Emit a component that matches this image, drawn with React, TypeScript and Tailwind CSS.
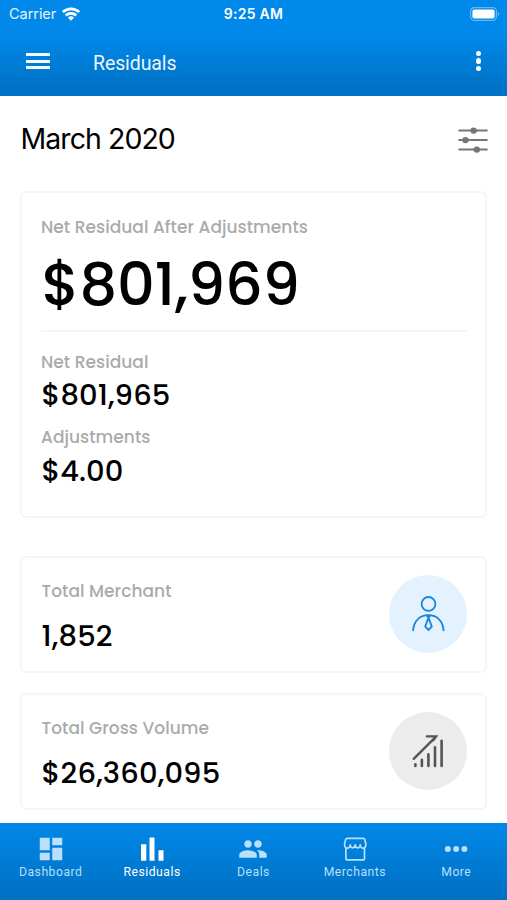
import React from 'react';
import { MdDashboard, MdPeople } from 'react-icons/md';

const WifiIcon = () => (
  <svg width="18" height="14" viewBox="0 0 18 14" fill="none" stroke="white" strokeWidth="2.7">
    <path d="M0.9 5.1a11.6 11.6 0 0 1 16.2 0" />
    <path d="M3.8 8.5a7.5 7.5 0 0 1 10.4 0" />
    <path d="M9 13.8L6 10.8a4.3 4.3 0 0 1 6 0z" fill="white" stroke="none" />
  </svg>
);

const BatteryIcon = () => (
  <svg width="30" height="14" viewBox="0 0 30 14">
    <rect x="0.6" y="0.6" width="25.8" height="12.8" rx="3.6" fill="none" stroke="white" strokeOpacity="0.4" strokeWidth="1.2" />
    <rect x="2.4" y="2.4" width="22.2" height="9.2" rx="2" fill="white" />
    <path d="M27.8 4.8c1.9 0.8 1.9 3.6 0 4.4z" fill="white" fillOpacity="0.4" />
  </svg>
);

const SlidersIcon = () => (
  <svg width="30" height="26" viewBox="0 0 30 26" stroke="#747776" strokeWidth="2" strokeLinecap="round" fill="#747776">
    <path d="M1.2 3.6h27.6M1.2 13.1h27.6M1.2 22.6h27.6" />
    <g stroke="none">
      <circle cx="15.6" cy="3.6" r="3.2" />
      <circle cx="7.5" cy="13.1" r="3.2" />
      <circle cx="18.8" cy="22.6" r="3.2" />
    </g>
  </svg>
);

const MerchantIcon = () => (
  <svg width="34" height="36" viewBox="0 0 34 36" fill="none" stroke="#1a86dc" strokeWidth="1.8" strokeLinecap="round" strokeLinejoin="round">
    <circle cx="17.5" cy="7.9" r="6.9" />
    <path d="M2.1 34.4C2.9 24.5 9.1 19.2 17.4 19.2s14.4 5.3 15.2 15.2" />
    <path d="M16 19.8l1.5 1.8 1.5-1.8M17.5 21.6l-3.3 9 3.3 3.4 3.3-3.4z" />
  </svg>
);

const GrowthIcon = () => (
  <svg width="34" height="34" viewBox="0 0 34 34" fill="none" stroke="#555" strokeWidth="2.3" strokeLinecap="round">
    <path d="M2.7 24.9L25 2.6M15.8 2.4h9.4l-2.7 3.8" />
    <path d="M4.4 30.3v1.6M10.9 25.8v6.1M17.4 20.3v11.6M24 13.2v18.7M30.6 6.8v25.1" strokeWidth="2.6" />
  </svg>
);

const BarsIcon = () => (
  <svg width="30" height="30" viewBox="0 0 30 30" fill="currentColor">
    <path d="M4 10.3h5.3v16.4H4zM12.5 3.6h5v23.1h-5zM21.5 16.3h5v10.4h-5z" />
  </svg>
);

const StoreIcon = () => (
  <svg width="30" height="30" viewBox="0 0 30 30" fill="none" stroke="currentColor" strokeWidth="1.7" strokeLinecap="round" strokeLinejoin="round">
    <path d="M7 4.4h16.4q1 0 1.3 1l1.1 4.4a2.8 3.8 0 0 1-5.6 1 2.5 3 0 0 1-5 0 2.5 3 0 0 1-5 0 2.8 3.8 0 0 1-5.6-1l1.1-4.4q0.3-1 1.3-1z" />
    <path d="M5.9 13.9v10.9q0 1 1 1h16.6q1 0 1-1V13.9" />
  </svg>
);

const MoreIcon = () => (
  <svg width="30" height="30" viewBox="0 0 30 30" fill="currentColor">
    <circle cx="6.8" cy="15" r="3" />
    <circle cx="15.1" cy="15" r="3" />
    <circle cx="23.4" cy="15" r="3" />
  </svg>
);

const navItems = [
  { label: 'Dashboard', icon: <MdDashboard size={30} /> },
  { label: 'Residuals', icon: <BarsIcon />, active: true },
  { label: 'Deals', icon: <MdPeople size={30} /> },
  { label: 'Merchants', icon: <StoreIcon /> },
  { label: 'More', icon: <MoreIcon /> },
];

interface StatCardProps {
  label: string;
  value: string;
  iconClass: string;
  icon: React.ReactNode;
}

const StatCard: React.FC<StatCardProps> = ({ label, value, iconClass, icon }) => (
  <section className="flex h-[117px] items-start justify-between rounded-md border-2 border-[#f6f6f6] pt-[16px] pr-[18.5px] pl-[19.5px]">
    <div className="whitespace-nowrap">
      <p className="mt-[4.5px] h-6 text-[17px] leading-6 font-medium tracking-[0.05px] text-[#a9abab]">{label}</p>
      <p className="mt-[15.5px] h-9 text-[29px] leading-9 font-medium tracking-[0.15px]">{value}</p>
    </div>
    <div className={`mt-[0.5px] flex size-[78px] items-center justify-center rounded-full ${iconClass}`}>{icon}</div>
  </section>
);

export default function App() {
  return (
    <div className="flex h-[900px] w-[507px] flex-col overflow-hidden bg-white font-['Poppins','Inter',sans-serif] text-black">
      <header className="h-24 shrink-0 bg-linear-to-b from-[#0089eb] from-35% to-[#0070c1] text-white">
        <div className="grid h-[27px] grid-cols-3 items-center pr-[7px] pl-[9px] font-['Inter',sans-serif] text-[14px]">
          <div className="flex items-center gap-[6px]">
            <span className="text-[14.5px] tracking-[-0.05px] text-white/90">Carrier</span>
            <WifiIcon />
          </div>
          <span className="pr-[2px] text-center font-semibold tracking-[0.25px]">9:25 AM</span>
          <span className="flex justify-end">
            <BatteryIcon />
          </span>
        </div>
        <div className="flex h-[68px] items-center pr-[26px] pl-[26px]">
          <button className="flex w-6 flex-col gap-[3.5px]" aria-label="Menu">
            <span className="h-[3px] w-full bg-white/95" />
            <span className="h-[3px] w-full bg-white/95" />
            <span className="h-[3px] w-full bg-white/95" />
          </button>
          <h1 className="mt-[6px] ml-[43px] font-['Roboto',sans-serif] text-[19.5px] tracking-[-0.1px] text-white/95">Residuals</h1>
          <button className="ml-auto flex flex-col gap-[2px]" aria-label="Options">
            <span className="size-[5.5px] rounded-full bg-white" />
            <span className="size-[5.5px] rounded-full bg-white" />
            <span className="size-[5.5px] rounded-full bg-white" />
          </button>
        </div>
      </header>

      <main className="flex-1 px-5 pt-[25px]">
        <div className="flex h-9 items-center justify-between pl-[0.5px]">
          <h2 className="font-['Inter',sans-serif] text-[28.5px] tracking-[-0.95px]">March 2020</h2>
          <div className="-mr-[0.5px] pt-[1px]">
            <SlidersIcon />
          </div>
        </div>

        <section className="mt-[34px] h-[327px] rounded-md border-2 border-[#f6f6f6] pt-[22px] pr-[18px] pl-[19px] whitespace-nowrap">
          <p className="text-[17px] leading-6 font-medium tracking-[0.05px] text-[#a9abab]">Net Residual After Adjustments</p>
          <p className="mt-[11px] h-[70px] pl-[0.5px] text-[59px] leading-[70px] font-medium tracking-[-0.3px]">$801,969</p>
          <div className="mt-[10px] h-[2px] bg-[#f6f6f6]" />
          <p className="mt-[18px] text-[17px] leading-6 font-medium tracking-[0.05px] text-[#a9abab]">Net Residual</p>
          <p className="mt-[3px] pl-[0.5px] text-[29px] leading-9 font-medium tracking-[0.1px]">$801,965</p>
          <p className="mt-[12px] text-[17px] leading-6 font-medium tracking-[0.05px] text-[#a9abab]">Adjustments</p>
          <p className="mt-[4px] pl-[0.5px] text-[29px] leading-9 font-medium">$4.00</p>
        </section>

        <div className="mt-[38px] flex flex-col gap-[20px]">
          <StatCard label="Total Merchant" value="1,852" iconClass="bg-[#e4f2ff]" icon={<MerchantIcon />} />
          <StatCard label="Total Gross Volume" value="$26,360,095" iconClass="bg-[#ececec]" icon={<GrowthIcon />} />
        </div>
      </main>

      <nav className="grid h-[77px] shrink-0 grid-cols-5 bg-linear-to-b from-[#0088e9] to-[#0070c1] pt-[11px] font-['Roboto',sans-serif]">
        {navItems.map((item) => (
          <button key={item.label} className={`flex flex-col items-center ${item.active ? 'text-white' : 'text-[#b8dffb]'}`}>
            {item.icon}
            <span className="mt-px text-[12.2px] leading-[15px] tracking-[0.5px]">{item.label}</span>
          </button>
        ))}
      </nav>
    </div>
  );
}
